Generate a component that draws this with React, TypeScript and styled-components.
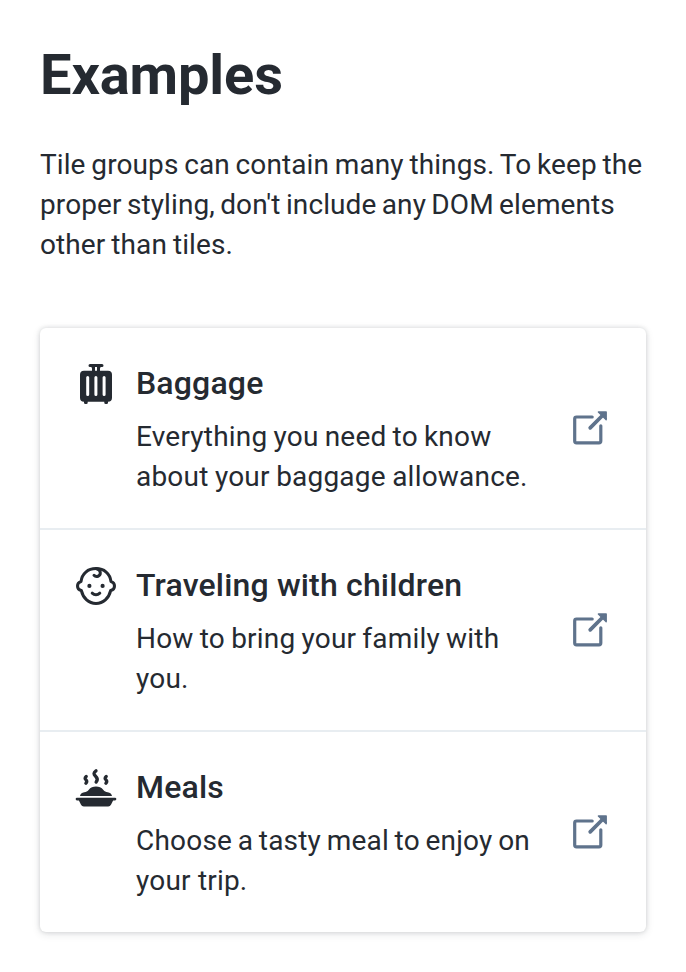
import React from "react";
import styled, { createGlobalStyle } from "styled-components";

const GlobalStyle = createGlobalStyle`
  *, *::before, *::after { box-sizing: border-box; }
  body {
    margin: 0;
    background: #fff;
    color: #252a31;
    font-family: Roboto, "Liberation Sans", sans-serif;
  }
`;

const Page = styled.main`
  padding: 40px;
`;

const Heading = styled.h2`
  margin: 0;
  font-size: 56px;
  line-height: 70px;
  font-weight: 700;
  letter-spacing: -0.12px;
`;

const Intro = styled.p`
  margin: 35px 0 63px;
  font-size: 28px;
  line-height: 40px;
  letter-spacing: 0.1px;
`;

const Line = styled.span<{ $gap: number }>`
  display: block;
  white-space: nowrap;
  word-spacing: ${({ $gap }) => $gap}px;
`;

const TileGroup = styled.div`
  border-radius: 6px;
  background: #fff;
  box-shadow: 0 0 4px rgba(37, 42, 49, 0.16), 0 2px 8px rgba(37, 42, 49, 0.12);
`;

const Tile = styled.a`
  display: flex;
  align-items: center;
  padding: 32px;
  color: inherit;
  text-decoration: none;

  & + & {
    border-top: 2px solid #e8edf1;
  }
`;

const TileIcon = styled.div`
  flex: none;
  align-self: flex-start;
  width: 48px;
  height: 48px;
  margin-right: 16px;
  color: #252a31;
`;

const TileBody = styled.div`
  flex: 1;
  min-width: 0;
`;

const TileTitle = styled.h4`
  margin: 0;
  font-size: 32px;
  line-height: 46px;
  font-weight: 500;
  letter-spacing: 0.17px;
`;

const TileText = styled.div`
  margin: 11px 0 -1px;
  font-size: 28px;
  line-height: 40px;
  letter-spacing: 0.2px;
`;

const TileAction = styled.div`
  flex: none;
  width: 48px;
  height: 48px;
  margin-left: 32px;
  color: #5f738c;
`;

const Svg = styled.svg`
  display: block;
  width: 48px;
  height: 48px;
`;

const BaggageIcon = () => (
  <Svg viewBox="0 0 48 48" fill="currentColor">
    <path d="M18 4h12a1.4 1.4 0 0 1 0 3h-1.2a2 2 0 0 0-.8 1.6V11h-3V7h-2v4h-3V8.6a2 2 0 0 0-.8-1.6H18a1.4 1.4 0 0 1 0-3Z" />
    <path
      fillRule="evenodd"
      d="M12 10.7h24a4 4 0 0 1 4 4v23.1a4 4 0 0 1-4 4v.9a1.4 1.4 0 0 1-1.4 1.4h-.9a1.4 1.4 0 0 1-1.4-1.4v-.9H15.7v.9a1.4 1.4 0 0 1-1.4 1.4h-.9a1.4 1.4 0 0 1-1.4-1.4v-.9a4 4 0 0 1-4-4V14.7a4 4 0 0 1 4-4ZM15.7 16a1.5 1.5 0 0 0-1.5 1.5v17a1.5 1.5 0 0 0 3 0v-17A1.5 1.5 0 0 0 15.7 16Zm8.2 0a1.5 1.5 0 0 0-1.5 1.5v17a1.5 1.5 0 0 0 3 0v-17A1.5 1.5 0 0 0 23.9 16Zm8.2 0a1.5 1.5 0 0 0-1.5 1.5v17a1.5 1.5 0 0 0 3 0v-17A1.5 1.5 0 0 0 32.1 16Z"
    />
  </Svg>
);

const ChildIcon = () => (
  <Svg viewBox="0 0 48 48" fill="none" stroke="currentColor" strokeWidth="3" strokeLinecap="round" strokeLinejoin="round">
    <path d="M24 6.6c8 0 14.1 4.8 15 13 2.1.5 3.5 2.2 3.5 4.4s-1.5 4-3.8 4.4C36.9 36.4 31.2 41.4 24 41.4S11.1 36.4 9.3 28.4C7 28 5.5 26.2 5.5 24s1.4-3.9 3.5-4.4c.9-8.2 7-13 15-13Z" />
    <path d="M24.6 6.8c2.3.6 3.7 2 3.7 4a3.6 3.6 0 0 1-6.3 2.5" />
    <path d="M20.2 31.2c2.2 2 5.4 2 7.6 0" />
    <g fill="currentColor" stroke="none">
      <circle cx="17.4" cy="23.9" r="2.1" />
      <circle cx="30.6" cy="23.9" r="2.1" />
    </g>
  </Svg>
);

const MealIcon = () => (
  <Svg viewBox="0 0 48 48">
    <g fill="currentColor">
      <path d="M8 32c.2-2 1.8-3.5 4.3-3.8 2-.3 3-.9 4.3-2.3 2-2.2 4.4-3.3 7.4-3.3s5.4 1.1 7.4 3.3c1.3 1.4 2.3 2 4.3 2.3 2.5.3 4.1 1.8 4.3 3.8Z" />
      <path d="M5 33.7h38a1.35 1.35 0 0 1 0 2.7h-1.9l-2 4.2a3.2 3.2 0 0 1-2.9 1.9H11.8a3.2 3.2 0 0 1-2.9-1.9l-2-4.2H5a1.35 1.35 0 0 1 0-2.7Z" />
    </g>
    <g fill="none" stroke="currentColor" strokeWidth="3.3" strokeLinecap="round">
      <path d="M24 6.8c-2.7 2-2.5 3.4-.4 5.4 2.1 2 2.5 3.6.5 5.9" />
      <path d="M14.2 12.5c-1.6 1.5-1.3 2.3-.2 3.3 1.1 1.1 1.1 2-.1 3.5" />
      <path d="M34.2 12.5c-1.6 1.5-1.3 2.3-.2 3.3 1.1 1.1 1.1 2-.1 3.5" />
    </g>
  </Svg>
);

const NewWindowIcon = () => (
  <Svg viewBox="0 0 48 48" fill="none" stroke="currentColor" strokeLinecap="round" strokeLinejoin="round">
    <path d="M26.2 13H10.5A1.8 1.8 0 0 0 8.7 14.8V37.1A1.8 1.8 0 0 0 10.5 38.9H33A1.8 1.8 0 0 0 34.8 37.1V21.8" strokeWidth="3.2" />
    <path d="M24.2 23.9L36 12" strokeWidth="3.7" />
    <path d="M32.4 7.9H40.2V15.8Z" fill="currentColor" strokeWidth="1.4" />
  </Svg>
);

type TextLine = { text: string; gap: number };

const intro: TextLine[] = [
  { text: "Tile groups can contain many things. To keep the", gap: -1.3 },
  { text: "proper styling, don't include any DOM elements", gap: -1.7 },
  { text: "other than tiles.", gap: -1.1 },
];

const tiles: { title: string; lines: TextLine[]; Icon: React.FC }[] = [
  {
    title: "Baggage",
    lines: [
      { text: "Everything you need to know", gap: -1 },
      { text: "about your baggage allowance.", gap: -0.7 },
    ],
    Icon: BaggageIcon,
  },
  {
    title: "Traveling with children",
    lines: [
      { text: "How to bring your family with", gap: -1 },
      { text: "you.", gap: 0 },
    ],
    Icon: ChildIcon,
  },
  {
    title: "Meals",
    lines: [
      { text: "Choose a tasty meal to enjoy on", gap: -1.5 },
      { text: "your trip.", gap: 0 },
    ],
    Icon: MealIcon,
  },
];

const Lines = ({ lines }: { lines: TextLine[] }) => (
  <>
    {lines.map(({ text, gap }) => (
      <Line key={text} $gap={gap}>
        {text}
      </Line>
    ))}
  </>
);

export default function App() {
  return (
    <>
      <GlobalStyle />
      <Page>
        <Heading>Examples</Heading>
        <Intro>
          <Lines lines={intro} />
        </Intro>
        <TileGroup>
          {tiles.map(({ title, lines, Icon }) => (
            <Tile key={title} href="#">
              <TileIcon>
                <Icon />
              </TileIcon>
              <TileBody>
                <TileTitle>{title}</TileTitle>
                <TileText>
                  <Lines lines={lines} />
                </TileText>
              </TileBody>
              <TileAction>
                <NewWindowIcon />
              </TileAction>
            </Tile>
          ))}
        </TileGroup>
      </Page>
    </>
  );
}
